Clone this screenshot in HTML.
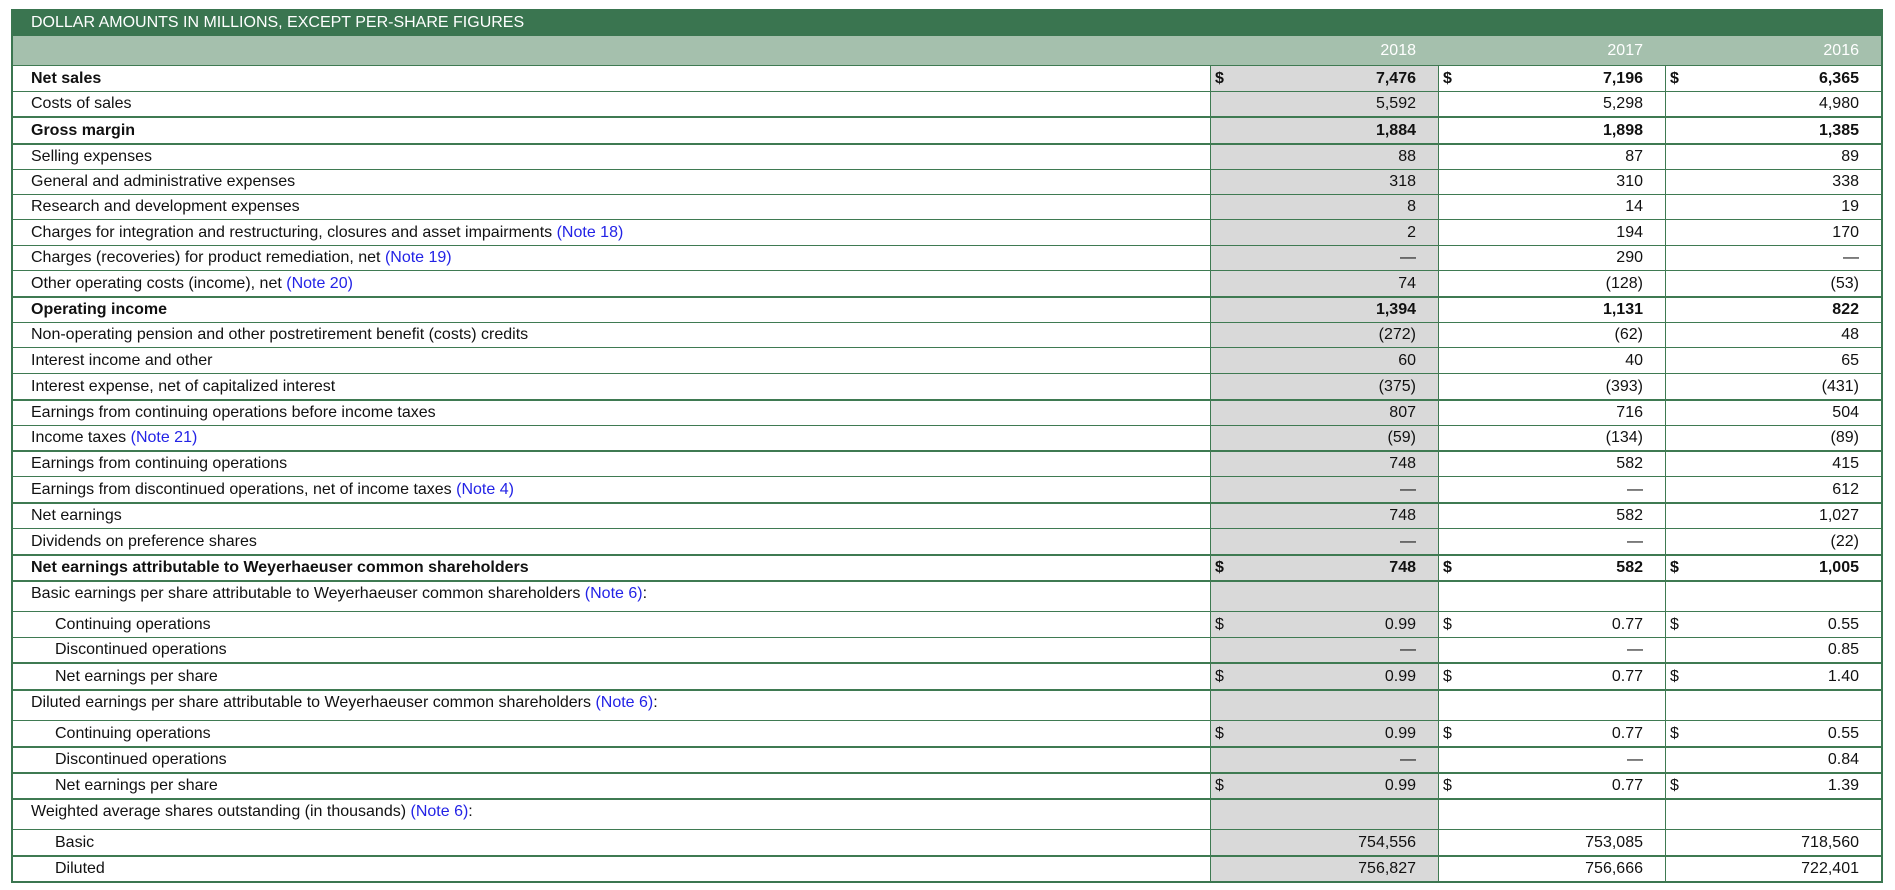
<!DOCTYPE html>
<html><head><meta charset="utf-8"><style>
*{margin:0;padding:0;box-sizing:border-box}
body{width:1895px;height:890px;background:#fff;font-family:"Liberation Sans",Arial,sans-serif;font-size:16px;color:#111;position:relative;overflow:hidden}
#t{position:absolute;left:11px;top:9px;width:1872px;border-left:2px solid #3b7650;border-right:2px solid #3b7650;border-bottom:2px solid #3b7650}
.h{height:27px;background:#3a7550;color:#fff;font-size:16px;line-height:27px;padding-left:18px}
.r{display:flex;border-top:1px solid #3f7a52}
.r.k{border-top:2px solid #3f7a52}
.r>div{display:flex;align-items:center}
.l{width:1197px;padding-left:18px}
.l.i{padding-left:42px}
.c{border-left:1px solid #3f7a52;justify-content:space-between;padding:0 22px 0 4px}
.c1{width:228px;background:#d9d9d9}
.c2{width:227px}
.c3{flex:1}
.b{font-weight:bold}
.n{color:#2323e6}
.y{background:#a5c0ad;color:#fff;border-top:none;height:29px}
.y .c{border-left:none;justify-content:flex-end}
.y .c1{background:#a5c0ad}
</style></head><body>
<div id="t">
<div class="h">DOLLAR AMOUNTS IN MILLIONS, EXCEPT PER-SHARE FIGURES</div>
<div class="r y"><div class="l"></div><div class="c c1">2018</div><div class="c c2">2017</div><div class="c c3">2016</div></div>
<div class="r b" style="height:26px"><div class="l">Net sales</div><div class="c c1"><span>$</span><span>7,476</span></div><div class="c c2"><span>$</span><span>7,196</span></div><div class="c c3"><span>$</span><span>6,365</span></div></div>
<div class="r" style="height:25px"><div class="l">Costs of sales</div><div class="c c1"><span></span><span>5,592</span></div><div class="c c2"><span></span><span>5,298</span></div><div class="c c3"><span></span><span>4,980</span></div></div>
<div class="r k b" style="height:27px"><div class="l">Gross margin</div><div class="c c1"><span></span><span>1,884</span></div><div class="c c2"><span></span><span>1,898</span></div><div class="c c3"><span></span><span>1,385</span></div></div>
<div class="r k" style="height:26px"><div class="l">Selling expenses</div><div class="c c1"><span></span><span>88</span></div><div class="c c2"><span></span><span>87</span></div><div class="c c3"><span></span><span>89</span></div></div>
<div class="r" style="height:25px"><div class="l">General and administrative expenses</div><div class="c c1"><span></span><span>318</span></div><div class="c c2"><span></span><span>310</span></div><div class="c c3"><span></span><span>338</span></div></div>
<div class="r" style="height:25px"><div class="l">Research and development expenses</div><div class="c c1"><span></span><span>8</span></div><div class="c c2"><span></span><span>14</span></div><div class="c c3"><span></span><span>19</span></div></div>
<div class="r" style="height:26px"><div class="l">Charges for integration and restructuring, closures and asset impairments&nbsp;<span class="n">(Note 18)</span></div><div class="c c1"><span></span><span>2</span></div><div class="c c2"><span></span><span>194</span></div><div class="c c3"><span></span><span>170</span></div></div>
<div class="r" style="height:25px"><div class="l">Charges (recoveries) for product remediation, net&nbsp;<span class="n">(Note 19)</span></div><div class="c c1"><span></span><span>—</span></div><div class="c c2"><span></span><span>290</span></div><div class="c c3"><span></span><span>—</span></div></div>
<div class="r" style="height:26px"><div class="l">Other operating costs (income), net&nbsp;<span class="n">(Note 20)</span></div><div class="c c1"><span></span><span>74</span></div><div class="c c2"><span></span><span>(128)</span></div><div class="c c3"><span></span><span>(53)</span></div></div>
<div class="r k b" style="height:26px"><div class="l">Operating income</div><div class="c c1"><span></span><span>1,394</span></div><div class="c c2"><span></span><span>1,131</span></div><div class="c c3"><span></span><span>822</span></div></div>
<div class="r" style="height:25px"><div class="l">Non-operating pension and other postretirement benefit (costs) credits</div><div class="c c1"><span></span><span>(272)</span></div><div class="c c2"><span></span><span>(62)</span></div><div class="c c3"><span></span><span>48</span></div></div>
<div class="r" style="height:26px"><div class="l">Interest income and other</div><div class="c c1"><span></span><span>60</span></div><div class="c c2"><span></span><span>40</span></div><div class="c c3"><span></span><span>65</span></div></div>
<div class="r" style="height:26px"><div class="l">Interest expense, net of capitalized interest</div><div class="c c1"><span></span><span>(375)</span></div><div class="c c2"><span></span><span>(393)</span></div><div class="c c3"><span></span><span>(431)</span></div></div>
<div class="r k" style="height:26px"><div class="l">Earnings from continuing operations before income taxes</div><div class="c c1"><span></span><span>807</span></div><div class="c c2"><span></span><span>716</span></div><div class="c c3"><span></span><span>504</span></div></div>
<div class="r" style="height:25px"><div class="l">Income taxes&nbsp;<span class="n">(Note 21)</span></div><div class="c c1"><span></span><span>(59)</span></div><div class="c c2"><span></span><span>(134)</span></div><div class="c c3"><span></span><span>(89)</span></div></div>
<div class="r k" style="height:26px"><div class="l">Earnings from continuing operations</div><div class="c c1"><span></span><span>748</span></div><div class="c c2"><span></span><span>582</span></div><div class="c c3"><span></span><span>415</span></div></div>
<div class="r" style="height:26px"><div class="l">Earnings from discontinued operations, net of income taxes&nbsp;<span class="n">(Note 4)</span></div><div class="c c1"><span></span><span>—</span></div><div class="c c2"><span></span><span>—</span></div><div class="c c3"><span></span><span>612</span></div></div>
<div class="r k" style="height:26px"><div class="l">Net earnings</div><div class="c c1"><span></span><span>748</span></div><div class="c c2"><span></span><span>582</span></div><div class="c c3"><span></span><span>1,027</span></div></div>
<div class="r" style="height:26px"><div class="l">Dividends on preference shares</div><div class="c c1"><span></span><span>—</span></div><div class="c c2"><span></span><span>—</span></div><div class="c c3"><span></span><span>(22)</span></div></div>
<div class="r k b" style="height:26px"><div class="l">Net earnings attributable to Weyerhaeuser common shareholders</div><div class="c c1"><span>$</span><span>748</span></div><div class="c c2"><span>$</span><span>582</span></div><div class="c c3"><span>$</span><span>1,005</span></div></div>
<div class="r k" style="height:31px"><div class="l" style="align-items:flex-start;padding-top:3px">Basic earnings per share attributable to Weyerhaeuser common shareholders&nbsp;<span class="n">(Note 6)</span>:</div><div class="c c1"></div><div class="c c2"></div><div class="c c3"></div></div>
<div class="r" style="height:26px"><div class="l i">Continuing operations</div><div class="c c1"><span>$</span><span>0.99</span></div><div class="c c2"><span>$</span><span>0.77</span></div><div class="c c3"><span>$</span><span>0.55</span></div></div>
<div class="r" style="height:25px"><div class="l i">Discontinued operations</div><div class="c c1"><span></span><span>—</span></div><div class="c c2"><span></span><span>—</span></div><div class="c c3"><span></span><span>0.85</span></div></div>
<div class="r k" style="height:27px"><div class="l i">Net earnings per share</div><div class="c c1"><span>$</span><span>0.99</span></div><div class="c c2"><span>$</span><span>0.77</span></div><div class="c c3"><span>$</span><span>1.40</span></div></div>
<div class="r k" style="height:31px"><div class="l" style="align-items:flex-start;padding-top:3px">Diluted earnings per share attributable to Weyerhaeuser common shareholders&nbsp;<span class="n">(Note 6)</span>:</div><div class="c c1"></div><div class="c c2"></div><div class="c c3"></div></div>
<div class="r" style="height:26px"><div class="l i">Continuing operations</div><div class="c c1"><span>$</span><span>0.99</span></div><div class="c c2"><span>$</span><span>0.77</span></div><div class="c c3"><span>$</span><span>0.55</span></div></div>
<div class="r k" style="height:26px"><div class="l i">Discontinued operations</div><div class="c c1"><span></span><span>—</span></div><div class="c c2"><span></span><span>—</span></div><div class="c c3"><span></span><span>0.84</span></div></div>
<div class="r k" style="height:26px"><div class="l i">Net earnings per share</div><div class="c c1"><span>$</span><span>0.99</span></div><div class="c c2"><span>$</span><span>0.77</span></div><div class="c c3"><span>$</span><span>1.39</span></div></div>
<div class="r k" style="height:31px"><div class="l" style="align-items:flex-start;padding-top:3px">Weighted average shares outstanding (in thousands)&nbsp;<span class="n">(Note 6)</span>:</div><div class="c c1"></div><div class="c c2"></div><div class="c c3"></div></div>
<div class="r" style="height:26px"><div class="l i">Basic</div><div class="c c1"><span></span><span>754,556</span></div><div class="c c2"><span></span><span>753,085</span></div><div class="c c3"><span></span><span>718,560</span></div></div>
<div class="r k" style="height:26px"><div class="l i">Diluted</div><div class="c c1"><span></span><span>756,827</span></div><div class="c c2"><span></span><span>756,666</span></div><div class="c c3"><span></span><span>722,401</span></div></div>
</div>
</body></html>
